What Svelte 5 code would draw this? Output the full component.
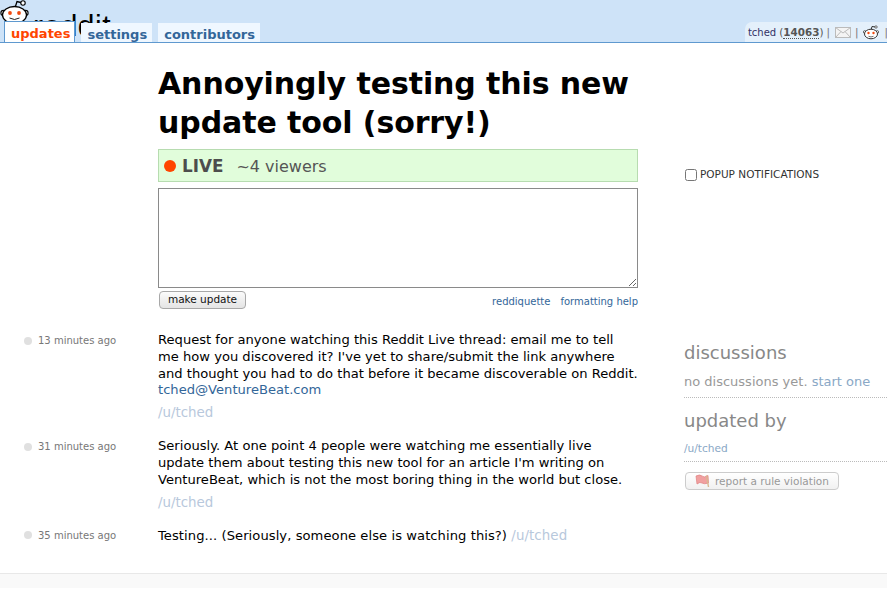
<script>
  const updates = [
    {
      time: "13 minutes ago",
      lines: [
        "Request for anyone watching this Reddit Live thread: email me to tell",
        "me how you discovered it? I've yet to share/submit the link anywhere",
        "and thought you had to do that before it became discoverable on Reddit.",
      ],
      link: "tched@VentureBeat.com",
    },
    {
      time: "31 minutes ago",
      lines: [
        "Seriously. At one point 4 people were watching me essentially live",
        "update them about testing this new tool for an article I'm writing on",
        "VentureBeat, which is not the most boring thing in the world but close.",
      ],
    },
  ];
</script>

<header class="header">
  <div class="logo">
    <svg class="alien" width="42" height="42" viewBox="0 0 42 42">
      <path d="M14 11 L17 1.5 L23 3" fill="none" stroke="#000" stroke-width="1.3" />
      <circle cx="23" cy="3" r="2.2" fill="#fff" stroke="#000" stroke-width="1.1" />
      <circle cx="3.5" cy="13" r="2.6" fill="#fff" stroke="#000" stroke-width="1.1" />
      <circle cx="25.5" cy="13" r="2.6" fill="#fff" stroke="#000" stroke-width="1.1" />
      <ellipse cx="14.5" cy="15" rx="12" ry="8.5" fill="#fff" stroke="#000" stroke-width="1.3" />
      <circle cx="10" cy="13" r="1.9" fill="#f04a10" />
      <circle cx="19" cy="13" r="1.9" fill="#f04a10" />
      <path d="M9.5 18 Q14.5 21 19.5 18" fill="none" stroke="#222" stroke-width="1" />
    </svg>
    <span class="wordmark">reddit</span>
  </div>
  <nav class="tabs">
    <a class="tab active" href="#updates">updates</a>
    <a class="tab" href="#settings">settings</a>
    <a class="tab" href="#contributors">contributors</a>
  </nav>
  <div class="user">
    <span class="name">tched</span>
    <span class="karma">(<b>14063</b>)</span>
    <span class="sep first">|</span>
    <svg class="mail-icon" width="16" height="11" viewBox="0 0 16 11">
      <rect x="0.5" y="0.5" width="15" height="10" fill="#f4f4f4" stroke="#bbb" />
      <path d="M0.5 0.5 L8 6 L15.5 0.5 M0.5 10.5 L6 4.5 M15.5 10.5 L10 4.5" fill="none" stroke="#bbb" />
    </svg>
    <span class="sep">|</span>
    <svg width="16" height="15" viewBox="0 0 16 15">
      <path d="M8 5 L9 1.5 L12.5 2" fill="none" stroke="#333" />
      <circle cx="13" cy="2" r="1.2" fill="#fff" stroke="#333" stroke-width="0.7" />
      <circle cx="1.8" cy="7" r="1.4" fill="#fff" stroke="#333" stroke-width="0.7" />
      <circle cx="14.2" cy="7" r="1.4" fill="#fff" stroke="#333" stroke-width="0.7" />
      <ellipse cx="8" cy="9" rx="6.5" ry="4.8" fill="#fff" stroke="#333" />
      <circle cx="5.5" cy="8" r="1.2" fill="#f04a10" />
      <circle cx="10.5" cy="8" r="1.2" fill="#f04a10" />
      <path d="M5.5 11.3 Q8 12.6 10.5 11.3" fill="none" stroke="#333" stroke-width="0.7" />
    </svg>
    <span class="sep">|</span>
  </div>
</header>

<div class="page">
  <main class="main">
    <div class="top">
      <h1>Annoyingly testing this new update tool (sorry!)</h1>
      <div class="live">
        <span class="dot"></span>
        <b>LIVE</b>
        <span class="viewers">~4 viewers</span>
      </div>
      <textarea aria-label="update"></textarea>
      <div class="actions">
        <button type="button">make update</button>
        <div class="help">
          <a href="#reddiquette">reddiquette</a>
          <a href="#formatting">formatting help</a>
        </div>
      </div>
    </div>

    <ol class="feed">
      {#each updates as u}
        <li class="item">
          <div class="when"><span class="bullet"></span>{u.time}</div>
          <div class="body">
            <p>
              {#each u.lines as line}<span class="line">{line}</span>{/each}
              {#if u.link}<a class="mail" href="#mail">{u.link}</a>{/if}
            </p>
            <a class="author" href="#tched">/u/tched</a>
          </div>
        </li>
      {/each}
      <li class="item">
        <div class="when"><span class="bullet"></span>35 minutes ago</div>
        <div class="body">
          <p class="short">Testing... (Seriously, someone else is watching this?) <a class="author inline" href="#tched">/u/tched</a></p>
        </div>
      </li>
    </ol>
  </main>

  <aside class="side">
    <label class="popup"><input type="checkbox" />POPUP NOTIFICATIONS</label>
    <h2>discussions</h2>
    <p class="none">no discussions yet. <a href="#start">start one</a></p>
    <h2 class="by">updated by</h2>
    <a class="by-user" href="#tched">/u/tched</a>
    <a class="report" href="#report">
      <svg width="16" height="14" viewBox="0 0 16 14">
        <path d="M2 2 Q6 0 8 2 T14 1.5 L14.5 9 Q10 10.5 8 9 T3 10 Z" fill="#f0a0a0" stroke="#e08080" stroke-width="0.7" />
        <path d="M12.5 1.5 L14.5 13" stroke="#d8b890" stroke-width="1.4" />
      </svg>
      report a rule violation
    </a>
  </aside>
</div>

<div class="footer"></div>

<style>
  :global(body) {
    margin: 0;
    background: #fff;
    font-family: "DejaVu Sans", Verdana, sans-serif;
    color: #000;
  }

  a {
    text-decoration: none;
  }

  .header {
    position: relative;
    height: 42px;
    background: #cee3f8;
    border-bottom: 1px solid #5f99cf;
    display: flex;
    justify-content: space-between;
    align-items: flex-end;
    overflow: hidden;
    box-sizing: content-box;
  }

  .logo {
    position: absolute;
    left: 0;
    top: 0;
  }

  .alien {
    position: absolute;
    left: 0;
    top: 0;
  }

  .wordmark {
    position: absolute;
    left: 33px;
    top: 9px;
    font-size: 30px;
    line-height: 34px;
    font-family: "Liberation Sans", sans-serif;
    letter-spacing: 0.5px;
    color: #000;
  }

  .tabs {
    position: relative;
    display: flex;
    align-items: flex-end;
    gap: 6px;
    padding-left: 4px;
  }

  .tab {
    height: 19px;
    padding: 0 5px 0 6px;
    background: #eff7ff;
    color: #369;
    font-size: 13px;
    font-weight: bold;
    line-height: 23px;
  }

  .tab.active {
    height: 20px;
    margin-bottom: -1px;
    padding: 0 4px 0 6px;
    background: #fff;
    color: #ff4500;
    border: 1px solid #5f99cf;
    border-bottom: 1px solid #fff;
    line-height: 24px;
  }

  .user {
    display: flex;
    align-items: center;
    gap: 4px;
    height: 20px;
    margin-right: -2px;
    padding: 0 0 0 3px;
    background: #e4f0fb;
    border-radius: 7px 0 0 0;
    font-size: 10.4px;
    color: #336;
    white-space: nowrap;
  }

  .user .name {
    font-size: 10px;
  }

  .user .karma {
    color: #555;
    margin-left: -1px;
  }

  .user .karma b {
    border-bottom: 1px dotted #555;
  }

  .user .sep {
    color: #777;
    margin: 0 1px;
  }

  .user .sep.first {
    margin-left: -1px;
  }

  .mail-icon {
    margin-right: -1px;
  }

  .page {
    display: flex;
    height: 530px;
  }

  .main {
    width: 638px;
    flex: none;
  }

  .top {
    padding-left: 158px;
  }

  h1 {
    margin: 0;
    padding-top: 21px;
    width: 480px;
    font-size: 30px;
    line-height: 39px;
    font-weight: bold;
    letter-spacing: -0.1px;
    height: 85px;
  }

  .live {
    box-sizing: border-box;
    display: flex;
    align-items: center;
    height: 33px;
    padding: 1px 0 0 5px;
    background: #e1fddb;
    border: 1px solid #b7dcb0;
    color: #555;
    font-size: 16px;
  }

  .dot {
    width: 12px;
    height: 12px;
    border-radius: 50%;
    background: #ff4500;
    margin-right: 6px;
  }

  .live b {
    font-size: 16.8px;
    color: #4d4d4d;
    margin-right: 13px;
  }

  textarea {
    display: block;
    box-sizing: border-box;
    width: 480px;
    height: 100px;
    margin: 6px 0 0;
    border: 1px solid #8a8a8a;
    background: #fff;
    padding: 2px;
  }

  .actions {
    display: flex;
    justify-content: space-between;
    align-items: flex-start;
    margin-top: 2px;
  }

  button {
    height: 18px;
    width: 87px;
    margin: 1px 0 0 1px;
    padding: 0 0 2px;
    border: 1px solid #a8a8a8;
    border-radius: 4px;
    background: linear-gradient(#fbfbfb, #e4e4e4);
    font-family: inherit;
    font-size: 10.5px;
    line-height: 13px;
    color: #111;
  }

  .help {
    display: flex;
    gap: 10px;
    margin-top: 5px;
    font-size: 10px;
    line-height: 14px;
  }

  .help a {
    color: #369;
  }

  .feed {
    list-style: none;
    margin: 23px 0 0;
    padding: 0;
  }

  .item {
    display: flex;
    margin-bottom: 16px;
  }

  .item:first-child {
    margin-bottom: 17px;
  }

  .when {
    display: flex;
    align-items: center;
    align-self: flex-start;
    width: 158px;
    flex: none;
    padding-left: 24px;
    box-sizing: border-box;
    height: 17px;
    font-size: 10px;
    color: #777;
  }

  .bullet {
    width: 8px;
    height: 8px;
    margin-right: 6px;
    border-radius: 50%;
    background: #e0e0e0;
  }

  .body p {
    margin: 0;
    font-size: 13.1px;
    line-height: 16.8px;
    white-space: nowrap;
  }

  .body p.short {
    letter-spacing: 0.07px;
  }

  .line {
    display: block;
  }

  .mail {
    display: block;
    color: #369;
  }

  .author {
    display: block;
    margin-top: 5px;
    font-size: 13.4px;
    line-height: 17px;
    color: #b8c8dc;
  }

  .author.inline {
    display: inline;
    margin: 0;
  }

  .side {
    margin-left: 46px;
    flex: 1;
    display: flex;
    flex-direction: column;
    align-items: stretch;
    min-width: 0;
  }

  .popup {
    display: flex;
    align-items: center;
    margin-top: 124px;
    height: 14px;
    font-size: 10.5px;
    color: #333;
    white-space: nowrap;
  }

  .popup input {
    margin: 1px 3px 0 1px;
    width: 12px;
    height: 12px;
  }

  h2 {
    margin: 161px 0 0;
    font-size: 18px;
    line-height: 22px;
    font-weight: normal;
    color: #888;
  }

  .none {
    margin: 9px 0 0;
    padding-bottom: 7px;
    border-bottom: 1px dotted #bbb;
    font-size: 13px;
    line-height: 17px;
    color: #999;
    white-space: nowrap;
  }

  .none a {
    color: #8aa8c6;
  }

  h2.by {
    margin-top: 12px;
  }

  .by-user {
    display: block;
    margin-top: 9px;
    padding-bottom: 6px;
    border-bottom: 1px dotted #bbb;
    font-size: 10.6px;
    line-height: 14px;
    color: #8aa8c6;
  }

  .report {
    display: flex;
    align-items: center;
    gap: 5px;
    align-self: flex-start;
    box-sizing: border-box;
    width: 154px;
    height: 18px;
    margin-top: 10px;
    margin-left: 1px;
    padding-left: 8px;
    border: 1px solid #ccc;
    border-radius: 4px;
    background: linear-gradient(#fff, #f1f1f1);
    font-size: 10.5px;
    color: #999;
    white-space: nowrap;
  }

  .footer {
    height: 15px;
    background: #f9f9f9;
    border-top: 1px solid #e8e8e8;
    box-sizing: border-box;
    overflow: hidden;
  }
</style>
